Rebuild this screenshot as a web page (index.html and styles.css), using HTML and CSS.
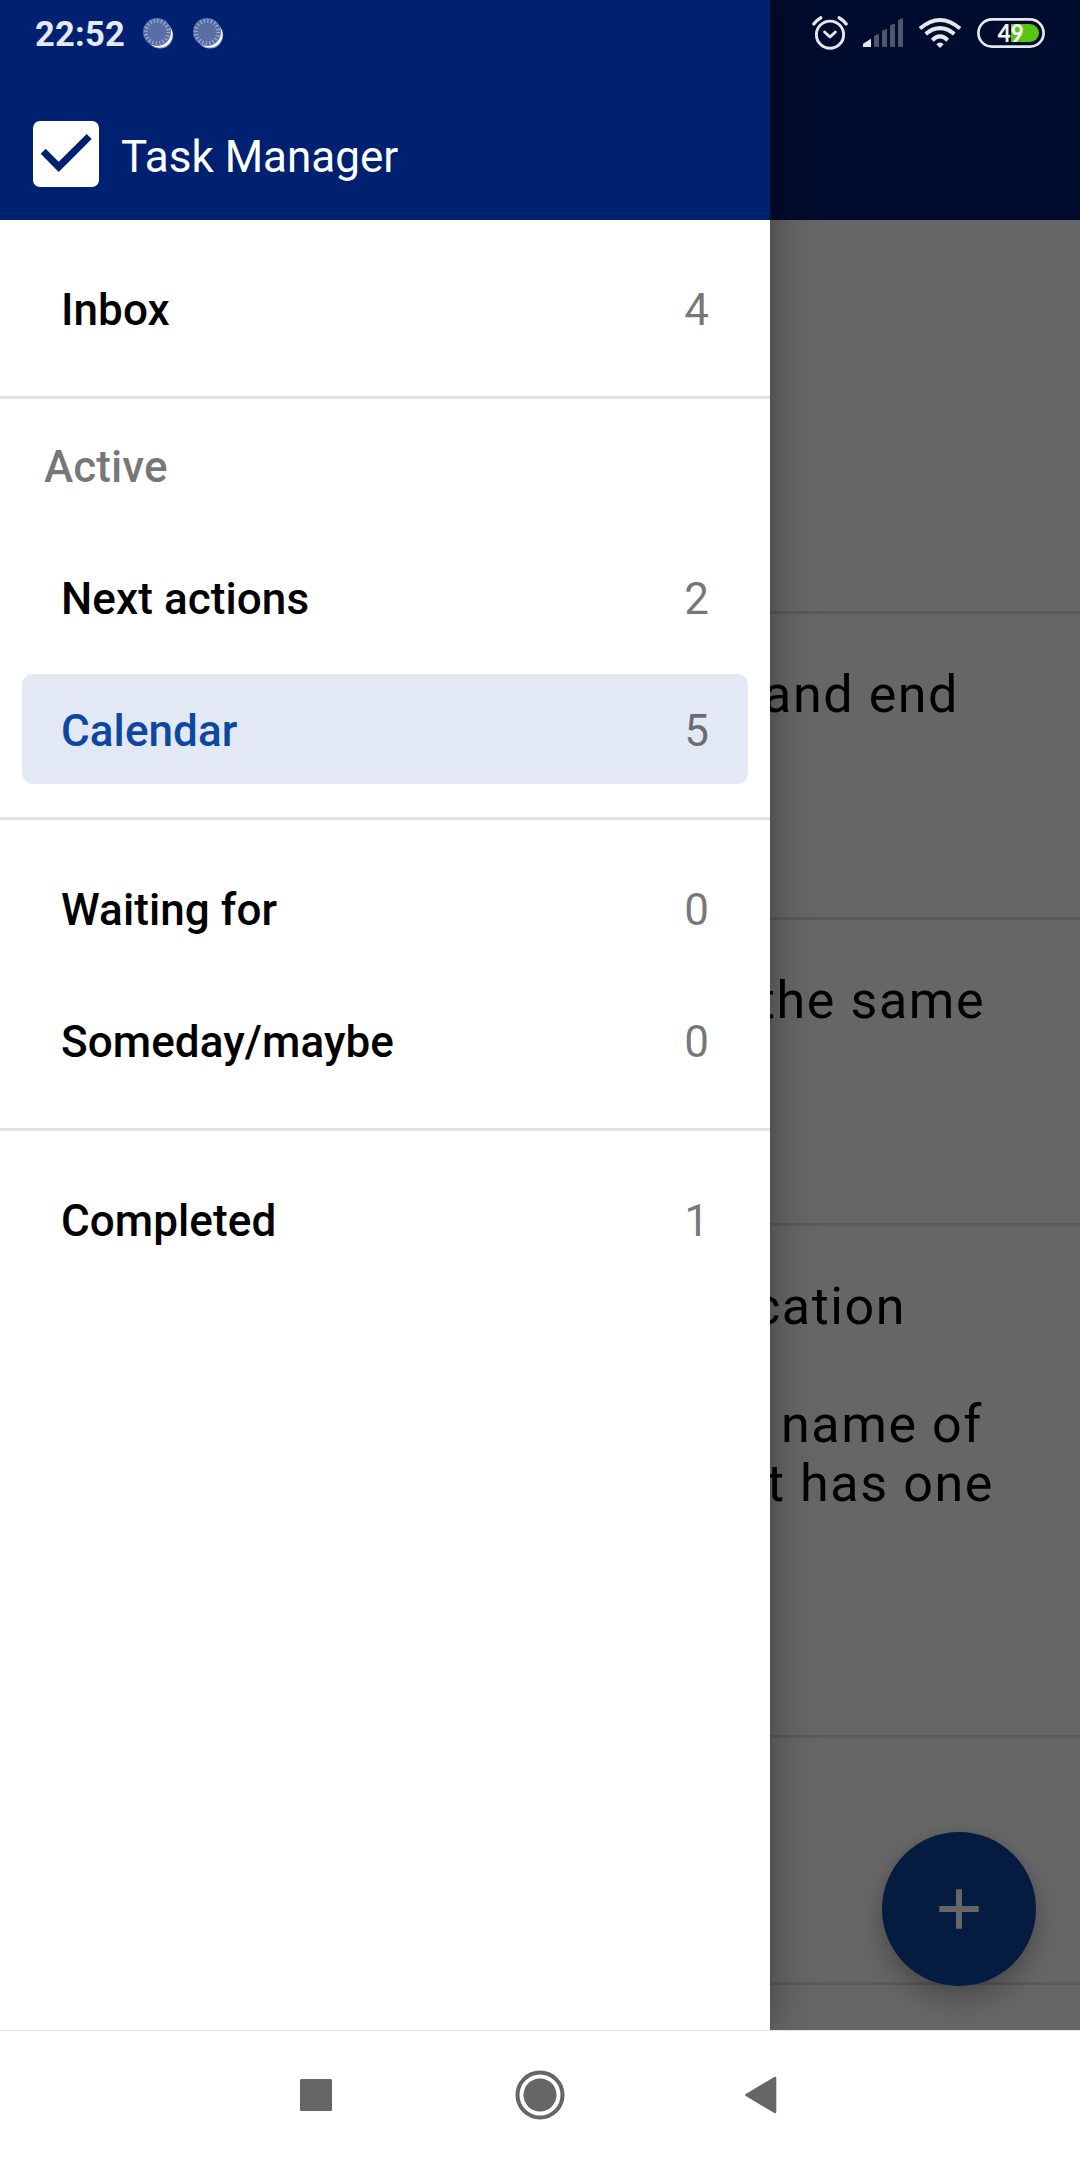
FILE: index.html
```html
<!DOCTYPE html>
<html lang="en">
<head>
<meta charset="utf-8">
<title>Task Manager</title>
<link rel="stylesheet" href="styles.css">
</head>
<body>
<div class="screen">
  <div class="app">
    <div class="content">
      <div class="app-bar"></div>
      <ul class="tasks">
        <li class="task task-first"></li>
        <li class="task"><p class="line line-a">and end</p></li>
        <li class="task"><p class="line line-b">the same</p></li>
        <li class="task task-long">
          <p class="line line-c">cation</p>
          <p class="line line-d">name of</p>
          <p class="line line-e">t has one</p>
        </li>
        <li class="task task-short"></li>
      </ul>
      <button class="fab" aria-label="Add task">
        <svg width="40" height="40" viewBox="0 0 40 40"><path d="M20 0.3V39.7M0.3 20H39.7" stroke="#fff" stroke-width="6"/></svg>
      </button>
    </div>
    <div class="scrim"></div>
    <aside class="drawer">
      <header class="drawer-header">
        <svg class="logo" width="66" height="66" viewBox="0 0 66 66"><rect width="66" height="66" rx="7" fill="#fff"/><path d="M7.7 32.7L12.7 27.7L25.7 40.7L53.7 13L58.7 18L25.7 51Z" fill="#002071"/></svg>
        <h1 class="title">Task Manager</h1>
      </header>
      <nav class="menu">
        <section class="group">
          <a class="item"><span>Inbox</span><span class="count">4</span></a>
        </section>
        <section class="group group-titled">
          <h2 class="group-title">Active</h2>
          <a class="item"><span>Next actions</span><span class="count">2</span></a>
          <a class="item item-selected"><span>Calendar</span><span class="count">5</span></a>
        </section>
        <section class="group">
          <a class="item"><span>Waiting for</span><span class="count">0</span></a>
          <a class="item"><span>Someday/maybe</span><span class="count">0</span></a>
        </section>
        <section class="group">
          <a class="item"><span>Completed</span><span class="count">1</span></a>
        </section>
      </nav>
    </aside>
    <div class="status-bar">
      <span class="time">22:52</span>
      <svg class="dial" width="32" height="32" viewBox="0 0 32 32">
        <circle cx="17" cy="17.3" r="13.2" fill="#8f9bc0"/>
        <circle cx="16.4" cy="16.6" r="13" fill="#fff"/>
        <circle cx="14" cy="14" r="14" fill="#5a6ea6"/>
        <circle cx="14" cy="14" r="11.3" fill="none" stroke="#a5b1cf" stroke-width="4" stroke-dasharray="1.1 2.45"/>
      </svg>
      <svg class="dial" width="32" height="32" viewBox="0 0 32 32">
        <circle cx="17" cy="17.3" r="13.2" fill="#8f9bc0"/>
        <circle cx="16.4" cy="16.6" r="13" fill="#fff"/>
        <circle cx="14" cy="14" r="14" fill="#5a6ea6"/>
        <circle cx="14" cy="14" r="11.3" fill="none" stroke="#a5b1cf" stroke-width="4" stroke-dasharray="1.1 2.45"/>
      </svg>
      <svg class="system" width="240" height="60" viewBox="810 0 240 60">
        <g fill="none" stroke="#e5e7ea" stroke-linecap="round">
          <g stroke-width="2.9">
            <circle cx="830" cy="34.7" r="13.6"/>
            <path d="M824.6 32L830 37L835.4 32" stroke-linejoin="round"/>
            <path d="M813.8 24Q816.3 20.3 820.9 17.7M839.1 17.7Q843.7 20.3 846.2 24" stroke-width="3.3"/>
          </g>
          <path stroke-width="4" stroke-linecap="butt" d="M920 28.6Q940 11.4 960 28.6M925.7 34Q940 22.3 954.3 34M932.3 40.2Q940 32.7 947.7 40.2"/>
          <rect x="978.4" y="19.4" width="65.2" height="27.2" rx="13.6" stroke-width="2.7"/>
        </g>
        <path d="M863 43.8L871 38.8V47H863Z" fill="#e5e7ea"/>
        <path d="M874 35.7L879 34V47H874ZM882 30.7L887 29V47H882ZM890 25.3L895 23.4V47H890ZM898 20L903 18V47H898Z" fill="#4d566c"/>
        <path d="M936.3 44.2Q940 40.6 943.7 44.2L940 48Z" fill="#e5e7ea"/>
        <path d="M1011 24H1030A9 9 0 0 1 1030 42H1011Z" fill="#58c415"/>
        <text class="battery" x="997.8" y="42" fill="#f0f3ee" textLength="26" lengthAdjust="spacingAndGlyphs">49</text>
      </svg>
    </div>
  </div>
  <footer class="nav-bar">
    <svg width="32" height="32" viewBox="0 0 32 32"><rect width="32" height="32" rx="1.5" fill="#666"/></svg>
    <svg class="home" width="50" height="50" viewBox="0 0 50 50"><circle cx="25" cy="25" r="22.5" fill="none" stroke="#666" stroke-width="4"/><circle cx="25" cy="25" r="16.5" fill="#666"/></svg>
    <svg width="32" height="38" viewBox="0 0 32 38"><path d="M1.5 19L30 2V36Z" fill="#666" stroke="#666" stroke-width="2.6" stroke-linejoin="round"/></svg>
  </footer>
</div>
</body>
</html>
```
FILE: styles.css
```css
* { box-sizing: border-box; margin: 0; padding: 0; }

body {
  font-family: Roboto, "Liberation Sans", sans-serif;
  background: #fff;
}

.screen {
  display: flex;
  flex-direction: column;
  width: 1080px;
  height: 2160px;
  overflow: hidden;
}

.app {
  position: relative;
  height: 2030px;
  overflow: hidden;
}

.app-bar { height: 220px; background: #002071; }

.tasks { list-style: none; }

.task {
  height: 306px;
  padding-top: 51px;
  border-bottom: 3px solid #e0e0e0;
}
.task-first { height: 394px; }
.task-long { height: 512px; }
.task-short { height: 247px; }

.line {
  font-size: 52px;
  line-height: 59px;
  letter-spacing: 1.6px;
  white-space: nowrap;
}
.line-a { padding-left: 763px; }
.line-b { padding-left: 758px; }
.line-c { padding-left: 753px; }
.line-d { padding: 59px 0 0 781px; }
.line-e { padding-left: 767px; }

.fab {
  position: absolute;
  right: 44px;
  bottom: 44px;
  display: flex;
  align-items: center;
  justify-content: center;
  width: 154px;
  height: 154px;
  border: 0;
  border-radius: 50%;
  background: #0d47a1;
  box-shadow: 0 14px 28px rgba(0, 0, 0, 0.25), 0 0 12px rgba(0, 0, 0, 0.08);
}

.scrim {
  position: absolute;
  inset: 0;
  background: rgba(0, 0, 0, 0.6);
}

.drawer {
  position: absolute;
  top: 0;
  left: 0;
  bottom: 0;
  width: 770px;
  background: #fff;
  box-shadow: 0 0 40px rgba(0, 0, 0, 0.38);
}

.drawer-header {
  display: flex;
  align-items: flex-start;
  gap: 22px;
  height: 220px;
  padding: 121px 33px 0;
  background: #002071;
}

.title {
  padding-top: 6px;
  font-size: 44px;
  font-weight: 400;
  line-height: 60px;
  color: #fff;
}

.group {
  display: flex;
  flex-direction: column;
  gap: 22px;
  padding: 33px 22px;
  border-bottom: 3px solid #e0e0e0;
}
.group:last-child { border-bottom: 0; }
.group-titled { padding-top: 0; }

.group-title {
  height: 121px;
  padding: 38px 22px 0;
  font-size: 44px;
  font-weight: 500;
  line-height: 60px;
  letter-spacing: 0.08px;
  color: rgba(0, 0, 0, 0.54);
}

.item {
  display: flex;
  justify-content: space-between;
  height: 110px;
  padding: 2px 39px 0;
  border-radius: 11px;
  font-size: 44px;
  font-weight: 500;
  line-height: 110px;
  letter-spacing: 0.08px;
  color: #000;
}
.item-selected { background: #e2e8f4; color: #0d47a1; }

.count { font-weight: 400; color: rgba(0, 0, 0, 0.54); }

.status-bar {
  position: absolute;
  top: 0;
  left: 0;
  right: 0;
  display: flex;
  height: 60px;
  padding: 0 30px 0 35px;
}

.time {
  width: 108px;
  padding-top: 14px;
  font-size: 34.5px;
  font-weight: 700;
  line-height: 40px;
  letter-spacing: 0.2px;
  color: #e5e9f1;
}

.dial { margin: 18px 18px 0 0; }
.system { margin-left: auto; }

.battery {
  font-family: Lato, sans-serif;
  font-size: 25px;
  font-weight: 900;
}

.nav-bar {
  display: flex;
  align-items: center;
  justify-content: space-between;
  height: 130px;
  padding: 0 303px 2px 300px;
  border-top: 1px solid #e4e4e4;
  background: #fff;
}

.home { margin-left: 3px; }
```
